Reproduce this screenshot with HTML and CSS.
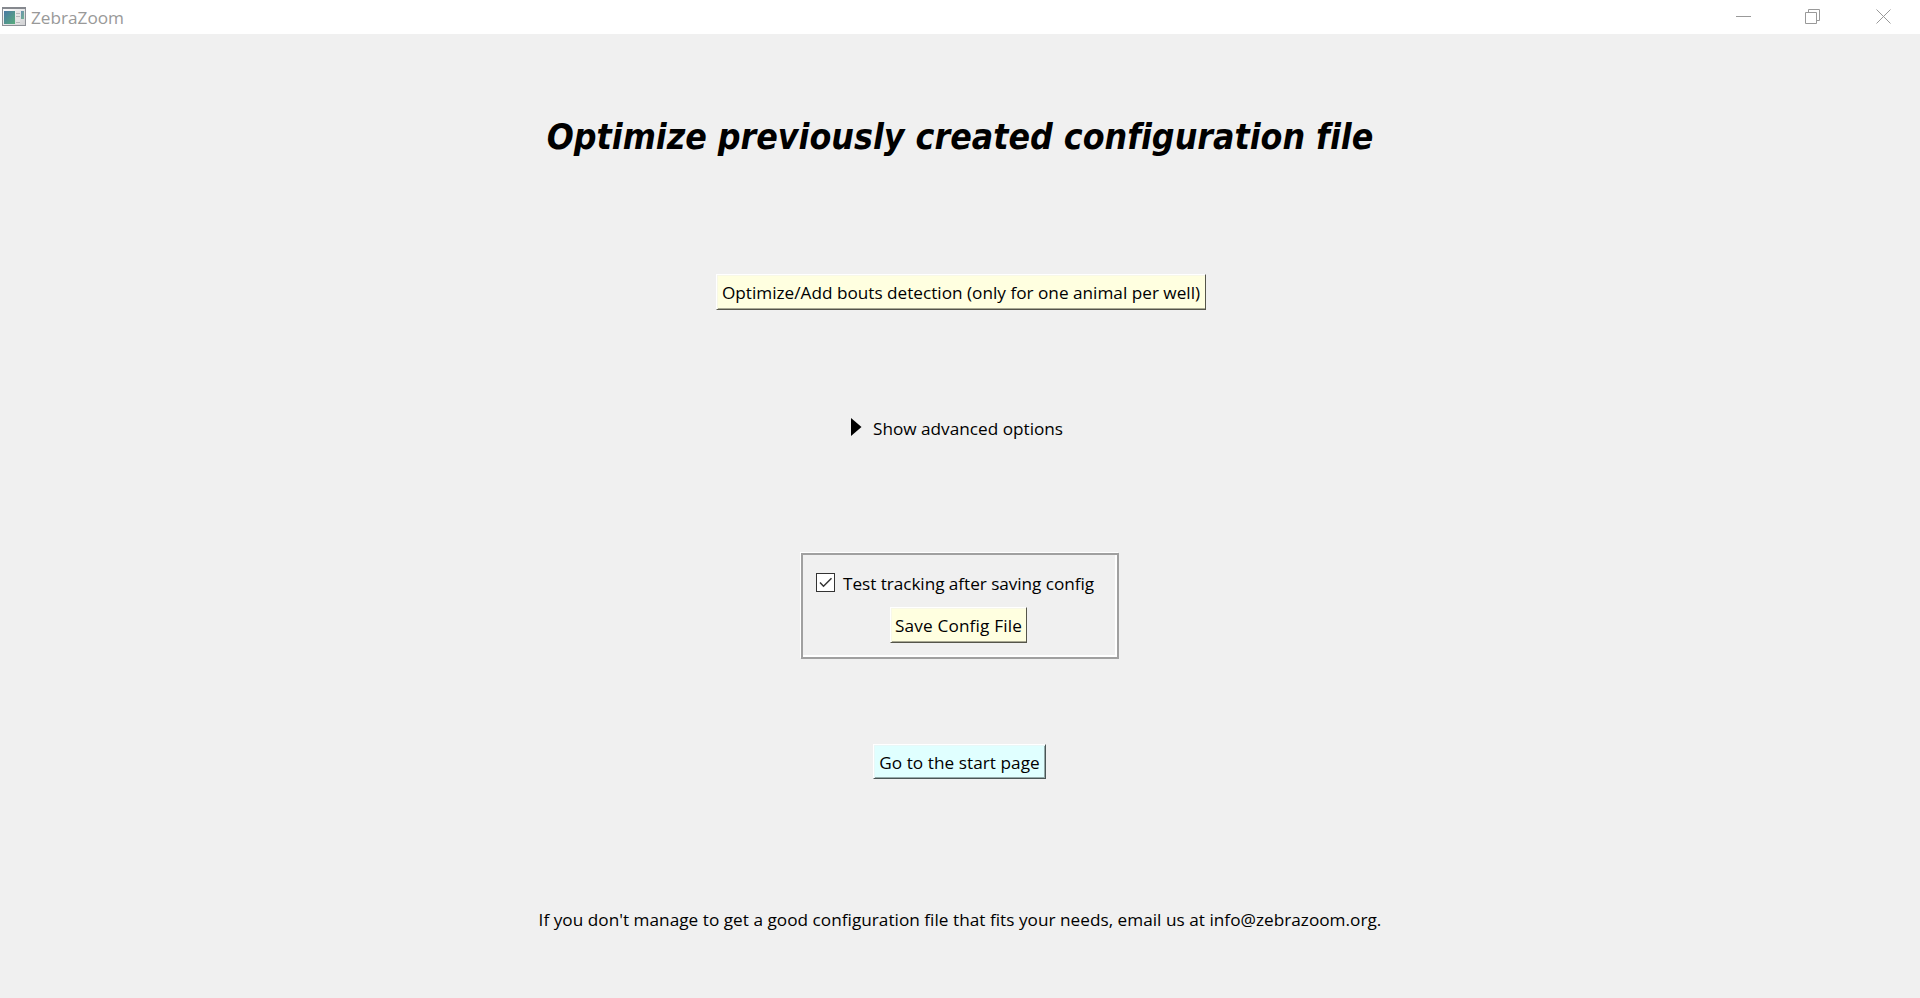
FILE: index.html
```html
<!DOCTYPE html>
<html lang="en">
<head>
<meta charset="utf-8">
<title>ZebraZoom</title>
<link rel="stylesheet" href="styles.css">
</head>
<body>
<header class="titlebar">
  <svg class="app-icon" width="24" height="19" viewBox="0 0 24 19">
    <defs>
      <linearGradient id="pane" x1="0" y1="0" x2="1" y2="1"><stop offset="0" stop-color="#4a78a4"/><stop offset="1" stop-color="#58ad7c"/></linearGradient>
      <linearGradient id="body" x1="0" y1="0" x2="1" y2="1"><stop offset="0" stop-color="#ffffff"/><stop offset="1" stop-color="#cfd0d2"/></linearGradient>
    </defs>
    <rect x=".5" y=".5" width="23" height="18" fill="url(#body)" stroke="#8d9096"/>
    <rect x="0" y="0" width="24" height="2" fill="#85888e"/>
    <rect x="2" y="4" width="11" height="13" fill="url(#pane)"/>
    <rect x="14" y="4" width="4" height="13" fill="#e4e4e4"/>
    <path d="M14 6.500h4M14 9.500h4M14 15.500h4" stroke="#b5b7ba"/>
    <rect x="19" y="4" width="3" height="8" fill="url(#pane)" opacity=".8"/>
  </svg>
  <span class="app-name">ZebraZoom</span>
  <div class="controls">
    <svg width="15" height="15" viewBox="0 0 15 15"><path d="M0 7.500h15"/></svg>
    <svg width="15" height="15" viewBox="0 0 15 15"><path d="M.5 3.500h11v11H.5zM3.500 3.500V.5h11v11h-3"/></svg>
    <svg width="15" height="15" viewBox="0 0 15 15"><path d="M.5.5l14 14M14.500.5l-14 14"/></svg>
  </div>
</header>
<main class="page">
  <h1 class="heading">Optimize previously created configuration file</h1>
  <button class="btn btn-bouts">Optimize/Add bouts detection (only for one animal per well)</button>
  <div class="advanced">
    <svg width="11" height="18" viewBox="0 0 11 18"><path d="M0 0l10.500 9L0 18z"/></svg>
    <span>Show advanced options</span>
  </div>
  <section class="save-frame">
    <label class="check">
      <svg width="19" height="19" viewBox="0 0 19 19"><rect x=".5" y=".5" width="18" height="18" fill="#fff" stroke="#333"/><path d="M4 9.500l3.500 3.700L15.500 5.200" fill="none" stroke="#333" stroke-width="1.500"/></svg>
      <span>Test tracking after saving config</span>
    </label>
    <button class="btn btn-save">Save Config File</button>
  </section>
  <button class="btn btn-start">Go to the start page</button>
  <p class="footer">If you don't manage to get a good configuration file that fits your needs, email us at info@zebrazoom.org.</p>
</main>
</body>
</html>
```
FILE: styles.css
```css
* { box-sizing: border-box; }
body {
  margin: 0;
  height: 998px;
  overflow: hidden;
  background: #f0f0f0;
  color: #000;
  font: 17.2px/24px "Open Sans", "Noto Sans", sans-serif;
  white-space: nowrap;
}
.titlebar {
  display: flex;
  height: 34px;
  padding: 7px 24px 0 2px;
  background: #fff;
}
.app-name { margin: -1px 0 0 5px; color: #999; }
.controls { display: flex; margin-left: auto; padding-top: 2px; }
.controls svg { fill: none; stroke: #999; }
.controls svg:nth-child(1) { margin-right: 54px; }
.controls svg:nth-child(2) { margin-right: 56px; }
.controls svg:nth-child(3) { margin-right: 5px; }
.page {
  display: flex;
  flex-direction: column;
  align-items: center;
  padding-top: 81px;
}
.heading {
  margin: 0;
  height: 43px;
  font: italic bold 35.4px/44px "DejaVu Sans Condensed", "DejaVu Sans", sans-serif;
  font-variant-ligatures: none;
  letter-spacing: -.02px;
}
.btn {
  display: block;
  height: 36px;
  padding: 2px 0 0;
  border: 1px solid;
  border-color: #fff #55554a #55554a #fff;
  border-radius: 0;
  background: #ffffe0;
  box-shadow: inset 1px 1px #f8f8e8, inset 0 -1px #a9a994;
  color: #000;
  font: inherit;
  text-align: center;
}
.btn-bouts { width: 490px; margin: 116px 0 0 2px; }
.advanced { display: flex; gap: 11px; margin: 107px 0 0 -6px; }
.advanced svg { margin-top: 1px; }
.save-frame {
  width: 318px;
  height: 106px;
  margin-top: 112px;
  padding: 18px 0 0 13px;
  border: 2px solid #a0a0a0;
  box-shadow: inset -2px -2px #fff, -1px -1px #fff;
}
.check { display: flex; gap: 8px; height: 34px; letter-spacing: -.05px; }
.check span { margin-top: -1px; }
.btn-save { width: 137px; margin-left: 74px; letter-spacing: .17px; }
.btn-start {
  width: 173px;
  height: 35px;
  margin: 85px 1px 0 0;
  border-color: #fff #4a5555 #4a5555 #fff;
  background: #e0ffff;
  box-shadow: inset 1px 1px #e8f8f8, inset -1px -1px #94a9a9;
  letter-spacing: .05px;
}
.footer { margin: 129px 0 0; letter-spacing: .02px; }
```
